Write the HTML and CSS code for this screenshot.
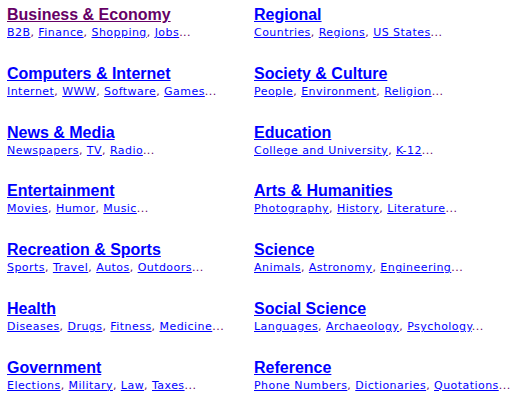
FILE: index.html
```html
<!DOCTYPE html>
<html>
<head>
<meta charset="utf-8">
<link rel="stylesheet" href="styles.css">
</head>
<body>
<div class="dir">
  <div class="cat"><a class="title visited" href="#">Business &amp; Economy</a><div class="subs"><a href="#">B2B</a>, <a href="#">Finance</a>, <a href="#">Shopping</a>, <a href="#">Jobs</a>...</div></div>
  <div class="cat"><a class="title" href="#">Regional</a><div class="subs"><a href="#">Countries</a>, <a href="#">Regions</a>, <a href="#">US States</a>...</div></div>
  <div class="cat"><a class="title" href="#">Computers &amp; Internet</a><div class="subs"><a href="#">Internet</a>, <a href="#">WWW</a>, <a href="#">Software</a>, <a href="#">Games</a>...</div></div>
  <div class="cat"><a class="title" href="#">Society &amp; Culture</a><div class="subs"><a href="#">People</a>, <a href="#">Environment</a>, <a href="#">Religion</a>...</div></div>
  <div class="cat"><a class="title" href="#">News &amp; Media</a><div class="subs"><a href="#">Newspapers</a>, <a href="#">TV</a>, <a href="#">Radio</a>...</div></div>
  <div class="cat"><a class="title" href="#">Education</a><div class="subs"><a href="#">College and University</a>, <a href="#">K-12</a>...</div></div>
  <div class="cat"><a class="title" href="#">Entertainment</a><div class="subs"><a href="#">Movies</a>, <a href="#">Humor</a>, <a href="#">Music</a>...</div></div>
  <div class="cat"><a class="title" href="#">Arts &amp; Humanities</a><div class="subs"><a href="#">Photography</a>, <a href="#">History</a>, <a href="#">Literature</a>...</div></div>
  <div class="cat"><a class="title" href="#">Recreation &amp; Sports</a><div class="subs"><a href="#">Sports</a>, <a href="#">Travel</a>, <a href="#">Autos</a>, <a href="#">Outdoors</a>...</div></div>
  <div class="cat"><a class="title" href="#">Science</a><div class="subs"><a href="#">Animals</a>, <a href="#">Astronomy</a>, <a href="#">Engineering</a>...</div></div>
  <div class="cat"><a class="title" href="#">Health</a><div class="subs"><a href="#">Diseases</a>, <a href="#">Drugs</a>, <a href="#">Fitness</a>, <a href="#">Medicine</a>...</div></div>
  <div class="cat"><a class="title" href="#">Social Science</a><div class="subs"><a href="#">Languages</a>, <a href="#">Archaeology</a>, <a href="#">Psychology</a>...</div></div>
  <div class="cat"><a class="title" href="#">Government</a><div class="subs"><a href="#">Elections</a>, <a href="#">Military</a>, <a href="#">Law</a>, <a href="#">Taxes</a>...</div></div>
  <div class="cat"><a class="title" href="#">Reference</a><div class="subs"><a href="#">Phone Numbers</a>, <a href="#">Dictionaries</a>, <a href="#">Quotations</a>...</div></div>
</div>
</body>
</html>
```
FILE: styles.css
```css
html, body {
  margin: 0;
  padding: 0;
  background: #ffffff;
}
body {
  padding: 6px 0 0 7px;
}
.dir {
  display: grid;
  grid-template-columns: 247px auto;
  row-gap: 25.8px;
}
.cat {
  display: flex;
  flex-direction: column;
  align-items: flex-start;
}
a {
  color: #0000ff;
  text-decoration: underline;
}
.title {
  font-family: "Liberation Sans", Arial, sans-serif;
  font-weight: bold;
  font-size: 16px;
  line-height: 18px;
}
.title.visited {
  color: #660066;
}
.subs {
  margin-top: 2px;
  font-family: "DejaVu Sans", Verdana, sans-serif;
  font-size: 11px;
  letter-spacing: 0.45px;
  line-height: 13px;
  color: #660066;
  white-space: nowrap;
}
```
